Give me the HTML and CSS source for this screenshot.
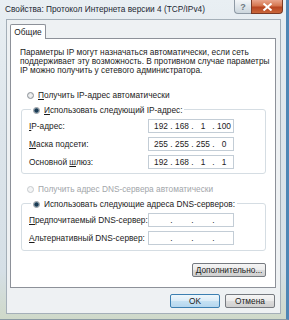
FILE: index.html
```html
<!DOCTYPE html>
<html lang="ru">
<head>
  <meta charset="UTF-8">
  <title>Свойства: Протокол Интернета версии 4 (TCP/IPv4)</title>
  <link rel="stylesheet" href="styles.css">
</head>
<body>
  <div class="window">
    <div class="titlebar">
      <span class="title">Свойства: Протокол Интернета версии 4 (TCP/IPv4)</span>
      <div class="caption-buttons">
        <span class="cap help">?</span>
        <span class="cap close">
          <svg width="11" height="8" viewBox="0 0 11 8"><path d="M1.5 0.5 L9.5 7.5 M9.5 0.5 L1.5 7.5" stroke="#fff" stroke-width="2"/></svg>
        </span>
      </div>
    </div>

    <div class="client">
      <div class="tabs">
        <span class="tab">Общие</span>
      </div>
      <div class="panel">
        <p class="intro">Параметры IP могут назначаться автоматически, если сеть<br>поддерживает эту возможность. В противном случае параметры<br>IP можно получить у сетевого администратора.</p>

        <div class="radio-row">
          <span class="radio"></span><span><u>П</u>олучить IP-адрес автоматически</span>
        </div>
        <div class="group">
          <div class="radio-row legend">
            <span class="radio checked"></span><span><u>И</u>спользовать следующий IP-адрес:</span>
          </div>
          <div class="field-row">
            <span><u>I</u>P-адрес:</span>
            <span class="ip"><b>192</b><i>.</i><b>168</b><i>.</i><b>1</b><i>.</i><b>100</b></span>
          </div>
          <div class="field-row">
            <span><u>М</u>аска подсети:</span>
            <span class="ip"><b>255</b><i>.</i><b>255</b><i>.</i><b>255</b><i>.</i><b>0</b></span>
          </div>
          <div class="field-row">
            <span>Основной <u>ш</u>люз:</span>
            <span class="ip"><b>192</b><i>.</i><b>168</b><i>.</i><b>1</b><i>.</i><b>1</b></span>
          </div>
        </div>

        <div class="radio-row disabled">
          <span class="radio"></span><span>Получить адрес DNS-сервера автоматически</span>
        </div>
        <div class="group group-dns">
          <div class="radio-row legend">
            <span class="radio checked"></span><span>Использовать следующие адреса DNS-серверов:</span>
          </div>
          <div class="field-row">
            <span><u>П</u>редпочитаемый DNS-сервер:</span>
            <span class="ip"><b></b><i>.</i><b></b><i>.</i><b></b><i>.</i><b></b></span>
          </div>
          <div class="field-row">
            <span><u>А</u>льтернативный DNS-сервер:</span>
            <span class="ip"><b></b><i>.</i><b></b><i>.</i><b></b><i>.</i><b></b></span>
          </div>
        </div>

        <div class="panel-actions">
          <button class="btn btn-wide"><u>Д</u>ополнительно...</button>
        </div>
      </div>

      <div class="footer">
        <button class="btn default">OK</button>
        <button class="btn">Отмена</button>
      </div>
    </div>
  </div>
</body>
</html>
```

FILE: styles.css
```css
* { box-sizing: border-box; }
body { margin: 0; font-family: "Liberation Sans", Arial, sans-serif; font-size: 8.3px; color: #1b1b1b; background: #cfdbe3; }

.window {
  width: 289px; height: 320px;
  display: flex; flex-direction: column;
  padding: 0 5px 6px 6px;
  background: linear-gradient(180deg, #e9eff3 0%, #dde5eb 40%, #d5dfe6 85%, #cfd9c9 100%);
  border-right: 3px solid #4f86b5;
  border-bottom: 1px solid #8a9aa4;
}

.titlebar { height: 19px; display: flex; justify-content: space-between; align-items: flex-start; margin-left: -6px; margin-right: -2px; }
.title { padding-left: 5px; line-height: 19px; font-size: 8.3px; color: #1d2832; white-space: nowrap; }
.caption-buttons { display: flex; }
.cap { height: 14px; display: flex; align-items: center; justify-content: center; border: 1px solid #8e9aa5; border-top: none; }
.help { width: 17px; border-right: none; border-radius: 0 0 0 4px; background: linear-gradient(180deg, #f3f6f8 0%, #dfe6eb 50%, #ccd6dd 100%); color: #6c7880; font-size: 9px; font-weight: bold; }
.close { width: 32px; border-color: #7a3a26; border-radius: 0 0 4px 0; background: linear-gradient(180deg, #e9a58c 0%, #d5764f 45%, #b84521 55%, #c9673b 100%); }

.client {
  flex: 1;
  display: flex; flex-direction: column;
  padding: 4px 4px 5px 3px;
  background: #eef1f3;
  border: 1px solid #a4afb8;
}

.tabs { display: flex; height: 15px; position: relative; z-index: 1; }
.tab {
  width: 36px; height: 15px;
  display: flex; align-items: center; justify-content: center;
  background: #fff;
  border: 1px solid #8d9199; border-bottom: none; border-radius: 2px 2px 0 0;
}

.panel {
  height: 250px;
  margin-top: -1px;
  padding: 9px 9px 0 9px;
  background: #fff;
  border: 1px solid #8d9199;
}

.intro { margin: 0; line-height: 9px; white-space: nowrap; }

.radio-row { display: flex; align-items: center; gap: 4px; height: 12px; padding-left: 7px; margin-top: 14px; white-space: nowrap; }
.radio {
  width: 7px; height: 7px; border-radius: 50%;
  border: 1px solid #8b9197;
  background: radial-gradient(circle, #f4f4f4 0%, #d9dcdf 100%);
  flex: none;
}
.radio.checked { background: radial-gradient(circle, #1b3a52 0 1.6px, #5b7c92 2.2px, #e9ecee 2.8px); }
.disabled { color: #a2a6aa; margin-top: 9px; }
.disabled .radio { border-color: #c6cacd; background: #f4f5f6; }

.group { margin: 8px 0 0 1px; border: 1px solid #d5dde3; border-radius: 3px; padding: 0 0 4px 7px; }
.group-dns { padding-bottom: 5px; }
.legend { margin: -6px 0 0 2px; padding: 0 2px; background: #fff; width: fit-content; }
.group + .radio-row { margin-top: 9px; }

.field-row { display: flex; align-items: center; justify-content: space-between; height: 14px; margin-top: 4px; padding-right: 31px; white-space: nowrap; }
.legend + .field-row { margin-top: 3px; }
.ip {
  width: 86px; height: 14px;
  display: flex; align-items: center;
  padding-left: 4px;
  border: 1px solid #c3cdd6;
  background: #fff;
}
.ip b { font-weight: normal; width: 16px; text-align: center; }
.ip i { font-style: normal; width: 5px; text-align: center; }

.panel-actions { display: flex; justify-content: flex-end; margin-top: 12px; }

.btn {
  height: 14px; width: 50px; padding: 0;
  font-family: inherit; font-size: 8.3px; color: #1b1b1b;
  border: 1px solid #767a80; border-radius: 2px;
  background: linear-gradient(180deg, #f5f5f5 0%, #ebebeb 48%, #dcdcdc 52%, #cfcfcf 100%);
}
.btn-wide { width: 74px; }
.btn.default { border-color: #3c7fb1; background: linear-gradient(180deg, #eef7fc 0%, #dcecf7 48%, #c5e1f3 52%, #b5d6ee 100%); }

.footer { display: flex; justify-content: flex-end; gap: 5px; margin-top: 6px; padding-right: 1px; }
```
